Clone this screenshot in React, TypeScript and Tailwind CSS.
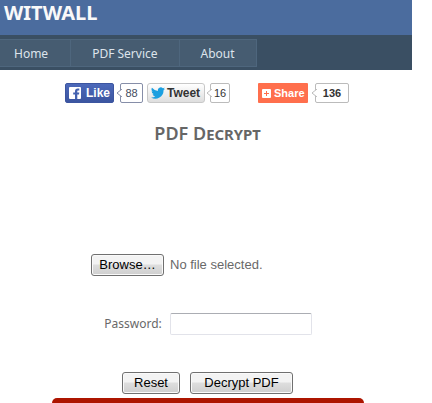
import React, { useRef, useState } from 'react';

const menuItems = [
  { label: 'Home', padding: 'pl-[14px] pr-[22px]' },
  { label: 'PDF Service', padding: 'px-[21px]' },
  { label: 'About', padding: 'px-[21px]' },
];

const buttonClass =
  "h-[22px] rounded-[3px] border border-[#707070] bg-gradient-to-b from-[#f3f3f3] from-45% via-[#dedede] via-50% to-[#cfcfcf] font-['Liberation_Sans',Arial,sans-serif] text-[13px] leading-5 text-black shadow-[inset_0_0_0_1px_#fafafa]";

interface CountBubbleProps {
  count: number;
  className: string;
  stroke: string;
}

function CountBubble({ count, className, stroke }: CountBubbleProps) {
  return (
    <span
      className={`relative flex h-5 items-center justify-center rounded-[2px] border bg-white ${className}`}
    >
      <svg className="absolute top-[5px] -left-[5px] h-2 w-[6px]" viewBox="0 0 6 8">
        <path d="M6 0L1 4l5 4" fill="#fff" stroke={stroke} />
      </svg>
      {count}
    </span>
  );
}

function SocialBar() {
  return (
    <div className="flex justify-center pl-[2px] font-['Liberation_Sans',Arial,sans-serif] text-[11px] leading-5">
      <button
        type="button"
        className="flex h-5 w-[49px] items-center gap-[5px] rounded-[2px] border border-[#3c55a0] bg-gradient-to-b from-[#4c69ba] to-[#3b55a0] pl-[3px] font-bold text-white"
      >
        <svg className="h-3 w-3 shrink-0" viewBox="0 0 12 12">
          <rect width="12" height="12" rx="1" fill="#fff" />
          <path
            d="M6 12V7.6H4.2V5.6H6V4.4C6 2.5 7 1.6 8.7 1.6h1.6v2H9.2c-.7 0-.9.3-.9.9v1.1h2L10 7.6H8.3V12z"
            fill="#4462b0"
          />
        </svg>
        <span className="text-xs">Like</span>
      </button>
      <CountBubble
        count={88}
        stroke="#868ea8"
        className="ml-[6px] w-[23px] border-[#868ea8] text-[#444d60]"
      />

      <button
        type="button"
        className="ml-1 flex h-5 w-[58px] items-center gap-[2px] rounded-[3px] border border-[#c8c8c8] bg-gradient-to-b from-white to-[#dedede] pl-[3px] font-bold text-[#333]"
      >
        <svg className="h-[14px] w-[14px] shrink-0" viewBox="0 0 24 24">
          <path
            d="M24 4.6a10 10 0 0 1-2.8.8 5 5 0 0 0 2.2-2.7 10 10 0 0 1-3.1 1.2 4.9 4.9 0 0 0-8.4 4.5A14 14 0 0 1 1.7 3.1a4.9 4.9 0 0 0 1.5 6.6 5 5 0 0 1-2.2-.6v.1a4.9 4.9 0 0 0 3.9 4.8 5 5 0 0 1-2.2.1 4.9 4.9 0 0 0 4.6 3.4A10 10 0 0 1 0 19.5a14 14 0 0 0 21.5-12.4A10 10 0 0 0 24 4.6z"
            fill="#1b9fe0"
          />
        </svg>
        <span className="text-xs">Tweet</span>
      </button>
      <CountBubble
        count={16}
        stroke="#bbb"
        className="ml-[5px] w-5 border-[#bbb] text-[#333]"
      />

      <button
        type="button"
        className="ml-7 flex h-5 w-[50px] items-center gap-[3px] rounded-[1px] bg-[#ff6f4d] pl-1 text-white"
      >
        <svg className="h-[9px] w-[9px] shrink-0" viewBox="0 0 9 9">
          <rect width="9" height="9" rx="1" fill="#fff" />
          <path d="M4 2h1v2h2v1H5v2H4V5H2V4h2z" fill="#ff6f4d" />
        </svg>
        <span className="font-bold">Share</span>
      </button>
      <CountBubble
        count={136}
        stroke="#bbb"
        className="ml-[7px] w-[34px] border-[#bbb] font-bold text-[#333]"
      />
    </div>
  );
}

export default function App() {
  const fileInput = useRef<HTMLInputElement>(null);
  const [fileName, setFileName] = useState('');

  return (
    <div className="mr-5 bg-white font-['Noto_Sans','Open_Sans',sans-serif] text-[#696969]">
      <header>
        <div className="h-[35px] bg-[#4b6c9e] pl-1">
          <h1 className="text-xl leading-[26px] font-bold text-[#f9f9f9]">WITWALL</h1>
        </div>
        <nav className="flex h-[35px] items-center bg-[#3a4f63] pt-px pb-px">
          {menuItems.map((item) => (
            <a
              key={item.label}
              href="#"
              className={`h-7 border-y border-r border-[#4e667d] bg-[#465c71] text-xs leading-7 text-[#dde4ec] ${item.padding}`}
            >
              {item.label}
            </a>
          ))}
        </nav>
      </header>

      <main className="pt-[13px]">
        <SocialBar />

        <h2 className="mt-[18px] pl-[3px] text-center text-lg leading-6 font-semibold text-[#666] [font-variant:small-caps]">
          PDF Decrypt
        </h2>

        <form onSubmit={(e) => e.preventDefault()}>
          <div className="mt-[109px] flex items-center gap-[6px] pl-[91px]">
            <button
              type="button"
              onClick={() => fileInput.current?.click()}
              className={`w-[73px] ${buttonClass}`}
            >
              Browse…
            </button>
            <input
              ref={fileInput}
              type="file"
              aria-label="PDF file"
              className="hidden"
              onChange={(e) => setFileName(e.target.files?.[0]?.name ?? '')}
            />
            <span className="font-['Liberation_Sans',Arial,sans-serif] text-[13px] leading-5">
              {fileName || 'No file selected.'}
            </span>
          </div>

          <div className="mt-[37px] flex items-center justify-center gap-2 pl-1">
            <label htmlFor="password" className="text-xs leading-5">
              Password:
            </label>
            <input
              id="password"
              type="password"
              className="h-[22px] w-[142px] rounded-[2px] border border-[#e2e3ea] border-t-[#abadb3] bg-white px-1 text-xs"
            />
          </div>

          <div className="mt-[37px] flex justify-center gap-[10px] pl-[3px]">
            <button type="reset" onClick={() => setFileName('')} className={`w-[58px] ${buttonClass}`}>
              Reset
            </button>
            <button type="submit" className={`w-[103px] ${buttonClass}`}>
              Decrypt PDF
            </button>
          </div>
        </form>

        <div className="mt-1 mr-12 ml-[52px] h-[5px] rounded-t-[5px] bg-[#ad1500]" />
      </main>
    </div>
  );
}
